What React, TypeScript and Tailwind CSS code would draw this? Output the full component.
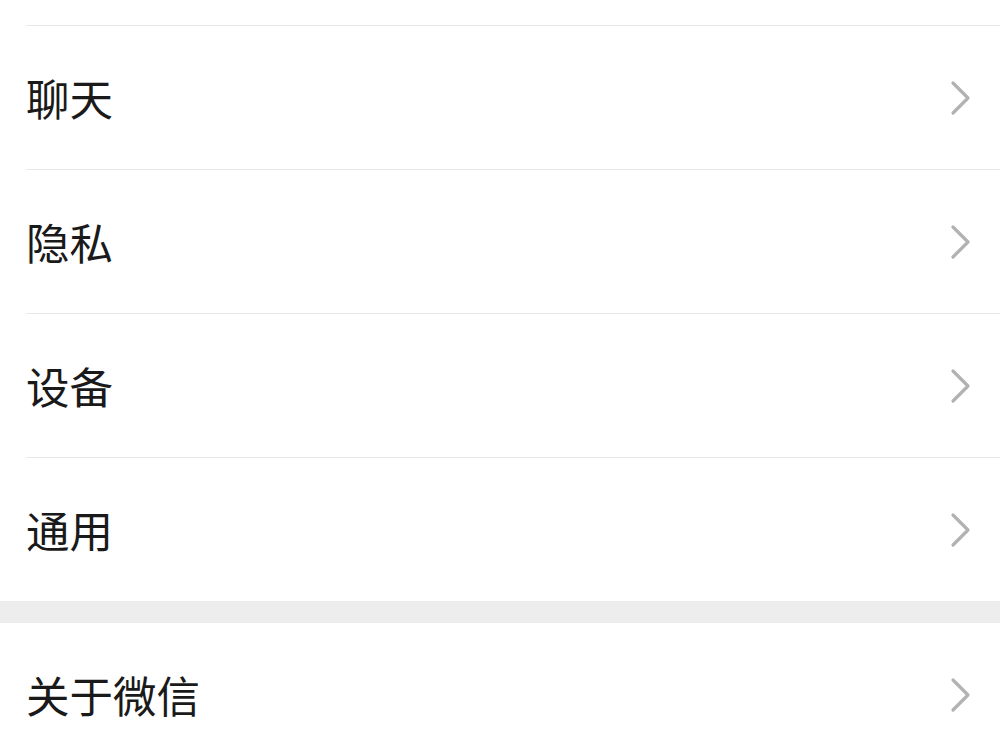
const items = ["聊天", "隐私", "设备", "通用"];

function Chevron() {
  return (
    <svg width="22" height="36" viewBox="0 0 22 36" fill="none">
      <polyline
        points="4,3 19,18 4,33"
        stroke="#b2b2b2"
        strokeWidth="3.2"
        strokeLinecap="round"
        strokeLinejoin="round"
      />
    </svg>
  );
}

function Row({ label, border = true }: { label: string; border?: boolean }) {
  return (
    <div className="pl-[26px]">
      <div
        className={`h-[144px] flex items-center justify-between pr-[29px] ${
          border ? "border-t border-[#e8e8e8]" : ""
        }`}
      >
        <span className="text-[43.5px] leading-none text-[#1a1a1a]">{label}</span>
        <Chevron />
      </div>
    </div>
  );
}

export default function App() {
  return (
    <div
      className="w-[1000px] h-[750px] overflow-hidden bg-white"
      style={{ fontFamily: '"Noto Sans CJK SC", "Noto Sans", sans-serif' }}
    >
      {/* tail of the row above */}
      <div className="h-[25px]" />

      {items.map((label) => (
        <Row key={label} label={label} />
      ))}

      {/* group gap */}
      <div className="h-[22px] bg-[#ededed]" />

      <Row label="关于微信" border={false} />
    </div>
  );
}
